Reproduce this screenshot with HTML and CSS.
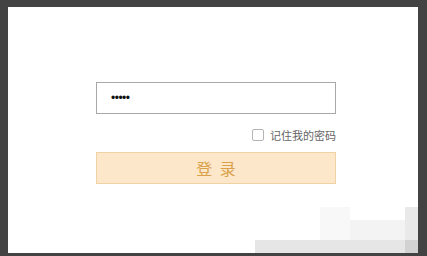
FILE: index.html
```html
<!DOCTYPE html>
<html>
<head>
<meta charset="utf-8">
<link rel="stylesheet" href="styles.css">
</head>
<body>
<div class="frame">
  <div class="panel">
    <form class="login">
      <input class="pwd" type="password" value="12345">
      <label class="remember"><span class="box"></span><span>记住我的密码</span></label>
      <button class="btn" type="button">登 录</button>
    </form>
    <div class="smudge s1"></div>
    <div class="smudge s2"></div>
    <div class="smudge s3"></div>
    <div class="smudge s4"></div>
    <div class="smudge s5"></div>
  </div>
</div>
</body>
</html>
```
FILE: styles.css
```css
html, body { margin: 0; padding: 0; }
body {
  background: #434343;
  width: 427px;
  height: 256px;
  overflow: hidden;
  font-family: "Noto Sans CJK SC", "Liberation Sans", sans-serif;
}
.frame {
  padding: 7px 9px 3px 8px;
  height: 246px;
}
.panel {
  position: relative;
  background: #fff;
  width: 410px;
  height: 246px;
  box-sizing: border-box;
  padding: 75px 0 0 88px;
}
.login {
  width: 240px;
  display: flex;
  flex-direction: column;
  margin: 0;
}
.pwd {
  box-sizing: border-box;
  width: 240px;
  height: 32px;
  border: 1px solid #a8a8a8;
  padding: 0 0 0 14px;
  margin: 0;
  font-family: "Liberation Sans", sans-serif;
  font-size: 12px;
  letter-spacing: -0.5px;
  color: #111;
  caret-color: transparent;
  outline: none;
}
.remember {
  align-self: flex-end;
  display: flex;
  align-items: center;
  gap: 6px;
  margin-top: 15px;
  height: 12px;
  font-size: 11px;
  color: #666;
  line-height: 12px;
}
.box {
  width: 10px;
  height: 10px;
  border: 1px solid #b4b4b4;
  border-radius: 2px;
  background: #fff;
}
.btn {
  margin-top: 11px;
  box-sizing: border-box;
  width: 240px;
  height: 32px;
  background: #fde7cb;
  border: 1px solid #efd3a4;
  color: #d9a24a;
  font-family: "Noto Sans CJK SC", sans-serif;
  font-size: 16px;
  letter-spacing: 2px;
  padding: 0 0 0 2px;
}
.smudge { position: absolute; }
.s1 { left: 247px; top: 233px; width: 150px; height: 13px; background: #e6e6e6; }
.s2 { left: 397px; top: 233px; width: 13px; height: 13px; background: #d2d2d2; }
.s3 { left: 397px; top: 200px; width: 13px; height: 33px; background: #e9e9e9; }
.s4 { left: 330px; top: 213px; width: 67px; height: 20px; background: #f3f3f3; }
.s5 { left: 312px; top: 200px; width: 30px; height: 33px; background: #f8f8f8; }
```
